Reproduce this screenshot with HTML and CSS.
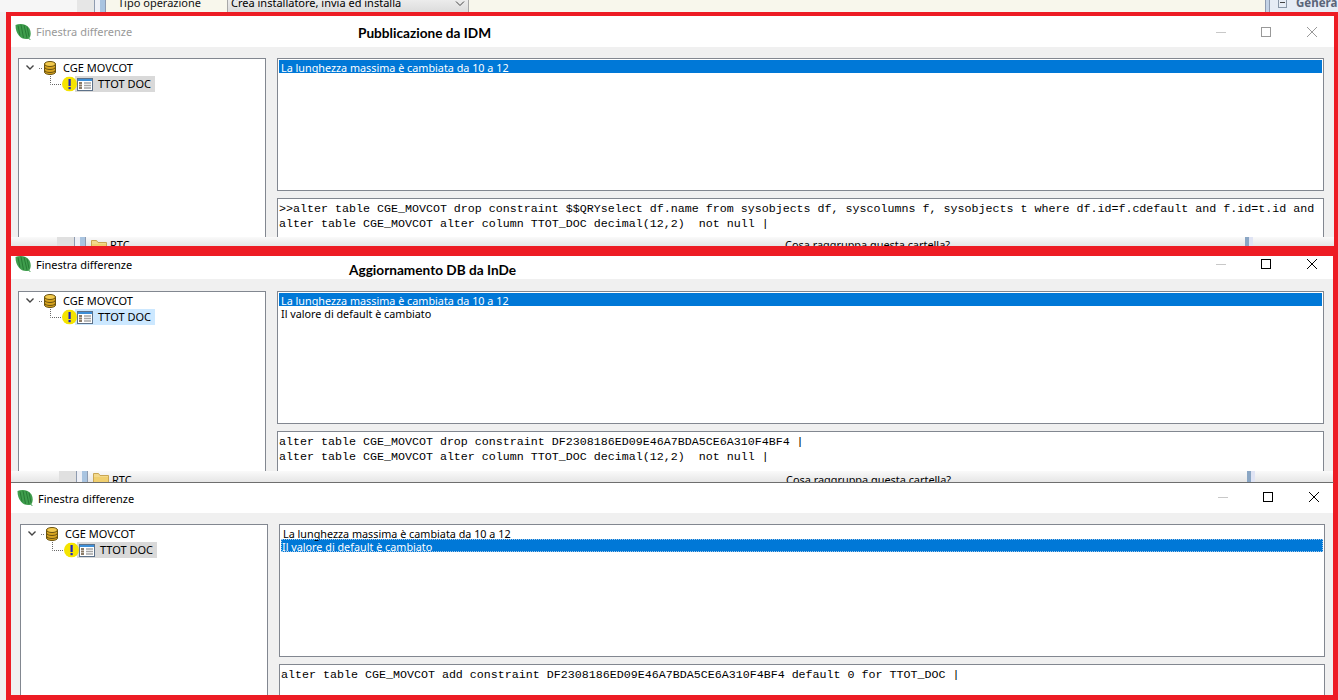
FILE: index.html
```html
<!DOCTYPE html>
<html lang="it">
<head>
<meta charset="utf-8">
<title>Finestra differenze</title>
<link rel="stylesheet" href="styles.css">
</head>
<body>
<svg class="defs" width="0" height="0" aria-hidden="true">
  <defs>
    <symbol id="leaf" viewBox="0 0 16 16">
      <path d="M.5 1C5-.8 11.500-.3 14.500 4.500c1.800 3.500 1.500 7.500-.2 9.800l1.400 1.200-.6.500-1.600-1.200C7 16.500.5 11 .5 1Z" fill="#3f9e4d"/>
      <path d="M3 1.500l2 10M6 .8l2.500 13M9 1l3 13M12 2.500l2 10" stroke="#1f6f2e" stroke-width="1" fill="none" opacity=".75"/>
    </symbol>
    <symbol id="db" viewBox="0 0 12 14">
      <path d="M.5 3v8c0 1.500 2.500 2.500 5.500 2.500s5.500-1 5.500-2.500V3Z" fill="#d9a520" stroke="#6b5310"/>
      <ellipse cx="6" cy="3" rx="5.500" ry="2.500" fill="#f2c94c" stroke="#6b5310"/>
      <path d="M.5 6c0 1.500 2.500 2.500 5.500 2.500s5.500-1 5.500-2.500M.5 9c0 1.500 2.500 2.500 5.500 2.500s5.500-1 5.500-2.500" fill="none" stroke="#6b5310"/>
    </symbol>
    <symbol id="table" viewBox="0 0 16 13">
      <rect x=".5" y=".5" width="15" height="12" fill="#fff" stroke="#5d7189"/>
      <rect x="1" y="1" width="14" height="2" fill="#3d8fd8"/>
      <path d="M2 5h3M2 7.500h3M2 10h3" stroke="#8a7a66" stroke-width="2"/>
      <path d="M7 5h7M7 7.500h7M7 10h7" stroke="#a5a5a5" stroke-width="1.500"/>
    </symbol>
    <symbol id="folder" viewBox="0 0 16 14">
      <path d="M.5 13V1.500h5l1.500 2h8.500V13Z" fill="#f3d98b" stroke="#c9a653"/>
      <rect x="1" y="5" width="14" height="8" fill="#f0cf6f"/>
    </symbol>
    <symbol id="warn" viewBox="0 0 15 15">
      <circle cx="7.500" cy="7.500" r="7.500" fill="#f5e400"/>
      <path d="M14 4a7.500 7.500 0 0 1-10 10.200A7.500 7.500 0 0 0 14 4Z" fill="#a89a00"/>
      <rect x="6.500" y="2.500" width="2.200" height="7" fill="#1c22c4"/>
      <rect x="6.500" y="10.500" width="2.200" height="2.200" fill="#1c22c4"/>
    </symbol>
  </defs>
</svg>

<div class="desk-top">
  <div class="dt-blank"></div>
  <div class="dt-grey"></div>
  <div class="dt-bars"></div>
  <div class="dt-label">Tipo operazione</div>
  <div class="dt-combo"><span>Crea installatore, invia ed installa</span>
    <svg class="dt-chev" width="10" height="6" viewBox="0 0 10 6"><path d="M1 .5l4 4 4-4" fill="none" stroke="#444"/></svg>
  </div>
  <div class="dt-fill"></div>
  <div class="dt-bars dt-bars-r"></div>
  <div class="dt-gen"><span class="dt-minus"></span><span class="dt-gen-text">Genera</span></div>
</div>

<div class="frame">
  <!-- Finestra 1 -->
  <section class="win win-a inactive">
    <header class="titlebar">
      <svg class="leaf"><use href="#leaf"/></svg>
      <span class="wintitle">Finestra differenze</span>
      <div class="wbtns">
        <span class="wb wb-min"><svg width="10" height="10" viewBox="0 0 10 10"><path class="wmin" d="M0 5.500h10"/></svg></span>
        <span class="wb"><svg width="10" height="10" viewBox="0 0 10 10"><rect class="wsq" x=".5" y=".5" width="9" height="9"/></svg></span>
        <span class="wb"><svg width="10" height="10" viewBox="0 0 10 10"><path class="wsq" d="M0 0l10 10M10 0L0 10"/></svg></span>
      </div>
    </header>
    <span class="note note-a">Pubblicazione da IDM</span>
    <div class="body">
      <div class="tree">
        <div class="trow">
          <svg class="tprefix" width="44" height="16" viewBox="0 0 44 16"><path class="chev" d="M7.500 5.500l3.500 3.500 3.500-3.500"/><path class="dots" d="M20 8.500h1M22 8.500h1"/><use href="#db" x="25" y="1" width="12" height="14"/></svg>
          <span class="tlabel">CGE MOVCOT</span>
        </div>
        <div class="trow">
          <svg class="tconn" width="56" height="16" viewBox="0 0 56 16"><path class="dotline" d="M31.500 0v8.500H43"/><use href="#warn" x="43" y=".5" width="15" height="15"/></svg>
          <span class="thl grey"><svg class="ticon"><use href="#table"/></svg>TTOT DOC</span>
        </div>
      </div>
      <div class="right">
        <div class="list">
          <div class="lrow sel">La lunghezza massima è cambiata da 10 a 12</div>
        </div>
        <pre class="sql">&gt;&gt;alter table CGE_MOVCOT drop constraint $$QRYselect df.name from sysobjects df, syscolumns f, sysobjects t where df.id=f.cdefault and f.id=t.id and
alter table CGE_MOVCOT alter column TTOT_DOC decimal(12,2)  not null |</pre>
      </div>
    </div>
  </section>
  <div class="strip strip-a">
    <span class="s-block"></span><span class="s-bars"></span>
    <svg class="s-folder"><use href="#folder"/></svg>
    <span class="s-rtc">RTC</span>
    <span class="s-q">Cosa raggruppa questa cartella?</span>
    <span class="s-split"></span>
  </div>
  <div class="band"></div>

  <!-- Finestra 2 -->
  <section class="win win-b">
    <header class="titlebar">
      <svg class="leaf"><use href="#leaf"/></svg>
      <span class="wintitle">Finestra differenze</span>
      <div class="wbtns">
        <span class="wb wb-min"><svg width="10" height="10" viewBox="0 0 10 10"><path class="wmin" d="M0 5.500h10"/></svg></span>
        <span class="wb"><svg width="10" height="10" viewBox="0 0 10 10"><rect class="wsq" x=".5" y=".5" width="9" height="9"/></svg></span>
        <span class="wb"><svg width="10" height="10" viewBox="0 0 10 10"><path class="wsq" d="M0 0l10 10M10 0L0 10"/></svg></span>
      </div>
    </header>
    <span class="note note-b">Aggiornamento DB da InDe</span>
    <div class="body">
      <div class="tree">
        <div class="trow">
          <svg class="tprefix" width="44" height="16" viewBox="0 0 44 16"><path class="chev" d="M7.500 5.500l3.500 3.500 3.500-3.500"/><path class="dots" d="M20 8.500h1M22 8.500h1"/><use href="#db" x="25" y="1" width="12" height="14"/></svg>
          <span class="tlabel">CGE MOVCOT</span>
        </div>
        <div class="trow">
          <svg class="tconn" width="56" height="16" viewBox="0 0 56 16"><path class="dotline" d="M31.500 0v8.500H43"/><use href="#warn" x="43" y=".5" width="15" height="15"/></svg>
          <span class="thl blue"><svg class="ticon"><use href="#table"/></svg>TTOT DOC</span>
        </div>
      </div>
      <div class="right">
        <div class="list">
          <div class="lrow sel">La lunghezza massima è cambiata da 10 a 12</div>
          <div class="lrow">Il valore di default è cambiato</div>
        </div>
        <pre class="sql">alter table CGE_MOVCOT drop constraint DF2308186ED09E46A7BDA5CE6A310F4BF4 |
alter table CGE_MOVCOT alter column TTOT_DOC decimal(12,2)  not null |</pre>
      </div>
    </div>
  </section>
  <div class="strip strip-b">
    <span class="s-block"></span><span class="s-bars"></span>
    <svg class="s-folder"><use href="#folder"/></svg>
    <span class="s-rtc">RTC</span>
    <span class="s-q">Cosa raggruppa questa cartella?</span>
    <span class="s-split"></span>
  </div>

  <!-- Finestra 3 -->
  <section class="win win-c">
    <header class="titlebar">
      <svg class="leaf"><use href="#leaf"/></svg>
      <span class="wintitle">Finestra differenze</span>
      <div class="wbtns">
        <span class="wb wb-min"><svg width="10" height="10" viewBox="0 0 10 10"><path class="wmin" d="M0 5.500h10"/></svg></span>
        <span class="wb"><svg width="10" height="10" viewBox="0 0 10 10"><rect class="wsq" x=".5" y=".5" width="9" height="9"/></svg></span>
        <span class="wb"><svg width="10" height="10" viewBox="0 0 10 10"><path class="wsq" d="M0 0l10 10M10 0L0 10"/></svg></span>
      </div>
    </header>
    <div class="body">
      <div class="tree">
        <div class="trow">
          <svg class="tprefix" width="44" height="16" viewBox="0 0 44 16"><path class="chev" d="M7.500 5.500l3.500 3.500 3.500-3.500"/><path class="dots" d="M20 8.500h1M22 8.500h1"/><use href="#db" x="25" y="1" width="12" height="14"/></svg>
          <span class="tlabel">CGE MOVCOT</span>
        </div>
        <div class="trow">
          <svg class="tconn" width="56" height="16" viewBox="0 0 56 16"><path class="dotline" d="M31.500 0v8.500H43"/><use href="#warn" x="43" y=".5" width="15" height="15"/></svg>
          <span class="thl grey"><svg class="ticon"><use href="#table"/></svg>TTOT DOC</span>
        </div>
      </div>
      <div class="right">
        <div class="list">
          <div class="lrow">La lunghezza massima è cambiata da 10 a 12</div>
          <div class="lrow sel focus">Il valore di default è cambiato</div>
        </div>
        <pre class="sql">alter table CGE_MOVCOT add constraint DF2308186ED09E46A7BDA5CE6A310F4BF4 default 0 for TTOT_DOC |</pre>
      </div>
    </div>
  </section>
</div>
</body>
</html>
```
FILE: styles.css
```css
* { box-sizing: border-box; }
html, body { margin: 0; padding: 0; }
body {
  width: 1338px;
  height: 700px;
  overflow: hidden;
  background: #f0f0f0;
  font-family: "Noto Sans", "Open Sans", sans-serif;
  font-size: 11px;
  color: #000;
}
.defs { position: absolute; }

/* Fascia superiore dell'applicazione sottostante */
.desk-top {
  display: flex;
  height: 12px;
  overflow: hidden;
  background: #f8f7ec;
  line-height: 6px;
}
.dt-blank { width: 77px; background: #f6f6f6; }
.dt-grey { width: 17px; background: #e6e6e6; }
.dt-bars {
  width: 12px;
  border-left: 1px solid #8e9bb0;
  border-right: 1px solid #8e9bb0;
  background: linear-gradient(90deg, #eef0f6 50%, #a9c4e0 50%);
}
.dt-label { width: 121px; padding-left: 12px; color: #111; }
.dt-combo {
  width: 242px;
  display: flex;
  justify-content: space-between;
  padding: 0 3px 0 3px;
  border-left: 1px solid #a8a8a8;
  border-right: 1px solid #a8a8a8;
  background: linear-gradient(#ececec, #dcdcdc);
}
.dt-chev { margin-top: 1px; }
.dt-fill { flex: 1; }
.dt-bars-r { width: 5px; background: #c4d3e6; }
.dt-gen {
  width: 68px;
  display: flex;
  padding-left: 8px;
  background: #e6ecf5;
}
.dt-minus {
  width: 9px;
  height: 8px;
  border: 1px solid #8a97a8;
  border-top: 0;
  background: linear-gradient(#444, #444) center 2px / 5px 1px no-repeat;
}
.dt-gen-text { margin-left: 9px; font-weight: 700; color: #5a6478; font-size: 11.5px; }

/* Cornice rossa che raccoglie le tre finestre */
.frame {
  margin-left: 6px;
  width: 1332px;
  height: 688px;
  border: solid #ed1c24;
  border-width: 4px 4px 5px 5px;
  display: flex;
  flex-direction: column;
  overflow: hidden;
}
.band { height: 10px; flex: none; background: #ed1c24; }

/* Finestre */
.win {
  position: relative;
  flex: none;
  background: #f0f0f0;
  overflow: hidden;
}
.win-a { height: 221px; --pl: 7px; --pr: 10px; --leaf: 4px; }
.win-b { height: 215px; --pl: 7px; --pr: 9px; --leaf: 4px; border-right: 1px solid #ed1c24; }
.win-c { height: 213px; --pl: 9px; --pr: 8px; --leaf: 6px; border-right: 1px solid #ed1c24; border-top: 1px solid #6e6e6e; }

.titlebar {
  display: flex;
  align-items: center;
  background: #fff;
  padding-left: var(--leaf);
}
.win-a .titlebar { height: 31px; }
.win-b .titlebar { height: 23px; padding-bottom: 7px; }
.win-c .titlebar { height: 30px; }
.leaf { width: 16px; height: 16px; flex: none; }
.wintitle { margin-left: 5px; }
.win-b .wintitle { margin-top: 1px; }
.inactive .wintitle { color: #999; }
.wbtns { margin-left: auto; display: grid; grid-template-columns: repeat(3, 46px); margin-right: -1px; }
.win-b .wbtns { margin-right: -2px; }
.win-c .wbtns { margin-right: -4px; margin-bottom: 2px; }
.wb { display: flex; justify-content: center; align-items: center; height: 14px; }
.wb-min { padding-left: 2px; }
.wb svg { display: block; }
.wmin { stroke: #c8c8c8; fill: none; }
.wsq { stroke: #000; fill: none; }
.inactive .wsq { stroke: #999; }

.note {
  position: absolute;
  font-family: "Lato", sans-serif;
  font-weight: 700;
  font-size: 13.65px;
  line-height: 16px;
  color: #000;
}
.note-a { left: 347px; top: 9px; }
.note-b { left: 338px; top: 6px; }

.body {
  display: grid;
  grid-template-columns: 248px 1fr;
  column-gap: 11px;
  padding: 11px var(--pr) 0 var(--pl);
}
.win-b .body { padding-top: 12px; }

.tree {
  height: 400px;
  padding: 1px 0 0 0;
  border: 1px solid #828790;
  background: #fff;
}
.win-c .tree { height: 300px; }
.trow { display: flex; align-items: stretch; height: 16px; line-height: 16px; }
.tprefix, .tconn { flex: none; display: block; overflow: visible; position: relative; z-index: 1; }
.thl { display: flex; align-items: center; padding: 0 4px 0 2px; }
.thl.grey { background: #d9d9d9; }
.thl.blue { background: #cce8ff; }
.ticon { width: 16px; height: 13px; margin-right: 5px; flex: none; }
.chev { fill: none; stroke: #444; stroke-width: 1.4; }
.dots { stroke: #777; stroke-width: 1; fill: none; }
.dotline { fill: none; stroke: #666; stroke-dasharray: 1 1; }

.right { display: flex; flex-direction: column; gap: 7px; min-width: 0; }
.list {
  height: 133px;
  padding: 1px;
  border: 1px solid #828790;
  background: #fff;
}
.lrow { height: 13px; line-height: 15px; padding-left: 2px; white-space: nowrap; font-size: 10.8px; }
.lrow.sel { background: #0078d7; color: #fff; }
.lrow.focus { padding-left: 1px; outline: 1px dotted #9fc6ea; outline-offset: -1px; }

.sql {
  margin: 0;
  height: 120px;
  padding: 3px 1px;
  border: 1px solid #828790;
  background: #fff;
  font-family: "Liberation Mono", monospace;
  font-size: 11.67px;
  line-height: 15px;
  overflow: hidden;
  white-space: pre;
}

/* Striscia dell'applicazione sottostante */
.strip {
  display: flex;
  flex: none;
  overflow: hidden;
  background: linear-gradient(#fafafa, #e6e6e6);
  line-height: 16px;
}
.strip-a { height: 9px; }
.strip-b { height: 11px; padding-left: 2px; border-right: 1px solid #ed1c24; }
.s-block { width: 17px; margin-left: 46px; background: #e0e0e0; }
.s-bars {
  width: 12px;
  border-left: 1px solid #8e9bb0;
  border-right: 1px solid #8e9bb0;
  background: linear-gradient(90deg, #eef0f6 50%, #a9c4e0 50%);
}
.s-folder { width: 16px; height: 14px; margin: 2px 0 0 5px; flex: none; }
.strip-b .s-folder { margin-top: 1px; }
.s-rtc { width: 675px; margin-left: 3px; flex: none; }
.strip-b .s-rtc { width: 674px; }
.s-q { width: 460px; flex: none; white-space: nowrap; font-size: 10.9px; }
.strip-b .s-q { width: 461px; }
.strip-b .s-rtc, .strip-b .s-q { margin-top: 1px; }
.s-split { width: 8px; flex: none; background: linear-gradient(90deg, #8aa6c4 50%, #e0e4f4 50%); }
```
